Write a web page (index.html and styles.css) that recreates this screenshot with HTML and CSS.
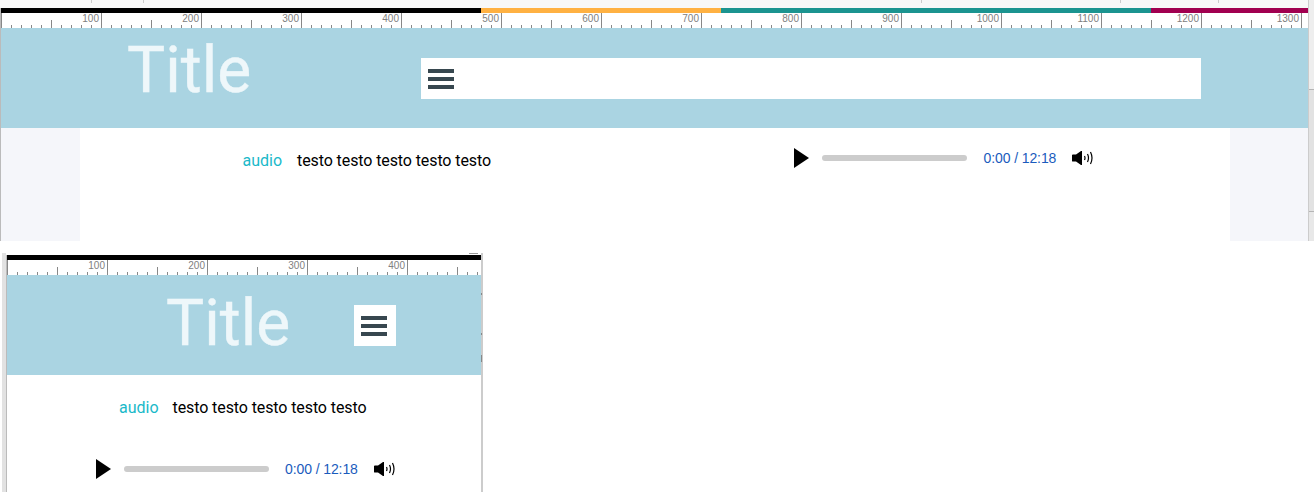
FILE: index.html
```html
<!DOCTYPE html>
<html lang="it">
<head>
    <meta charset="UTF-8">
    <meta name="viewport" content="width=device-width, initial-scale=1.0">
    <title>Title</title>
    <link rel="stylesheet" href="styles.css">
</head>
<body>

    <!-- Vista larga -->
    <div class="screen-wide">
        <div class="column-wide">
            <div class="top-strip">
                <span class="strip-tick tick-a"></span>
                <span class="strip-tick tick-b"></span>
                <span class="strip-tick tick-c"></span>
                <span class="strip-tick tick-d"></span>
                <span class="strip-tick tick-e"></span>
            </div>
            <div class="frame frame-wide">
                <div class="breakpoints">
                    <div class="bp bp-black"></div>
                    <div class="bp bp-orange"></div>
                    <div class="bp bp-teal"></div>
                    <div class="bp bp-crimson"></div>
                </div>
                <div class="ruler">
                    <span>100</span><span>200</span><span>300</span><span>400</span><span>500</span><span>600</span><span>700</span><span>800</span><span>900</span><span>1000</span><span>1100</span><span>1200</span><span>1300</span>
                </div>
                <header class="header">
                    <h1 class="title">Title</h1>
                    <nav class="nav">
                        <div class="burger"><i></i><i></i><i></i></div>
                    </nav>
                </header>
                <div class="page">
                    <main class="content">
                        <div class="track">
                            <span class="track-label">audio</span>
                            <span class="track-text">testo testo testo testo testo</span>
                        </div>
                        <div class="player">
                            <svg class="play" width="15" height="20" viewBox="0 0 15 20"><path d="M0 0L15 10L0 20Z"/></svg>
                            <div class="progress"></div>
                            <span class="time">0:00 / 12:18</span>
                            <svg class="volume" width="21" height="14" viewBox="0 0 21 14"><path d="M0 4Q0 3.500 1 3.500H4L9 0H10V14H9L4 10.500H1Q0 10.500 0 10Z"/><path class="wave" d="M12.500 5Q13.500 7 12.500 9M15.500 3Q17.500 7 15.500 11M18.500 1Q21.500 7 18.500 13"/></svg>
                        </div>
                    </main>
                </div>
            </div>
        </div>
        <div class="rail">
            <div class="rail-part rail-top"></div>
            <div class="rail-part rail-mid"></div>
            <div class="rail-part rail-end"></div>
        </div>
    </div>

    <!-- Vista stretta -->
    <div class="screen-narrow">
        <div class="column-narrow">
            <div class="frame frame-narrow">
                <div class="breakpoints">
                    <div class="bp bp-black"></div>
                </div>
                <div class="ruler">
                    <span>100</span><span>200</span><span>300</span><span>400</span>
                </div>
                <header class="header">
                    <h1 class="title">Title</h1>
                    <nav class="nav">
                        <div class="burger"><i></i><i></i><i></i></div>
                    </nav>
                </header>
                <main class="content">
                    <div class="track">
                        <span class="track-label">audio</span>
                        <span class="track-text">testo testo testo testo testo</span>
                    </div>
                    <div class="player">
                        <svg class="play" width="15" height="20" viewBox="0 0 15 20"><path d="M0 0L15 10L0 20Z"/></svg>
                        <div class="progress"></div>
                        <span class="time">0:00 / 12:18</span>
                        <svg class="volume" width="21" height="14" viewBox="0 0 21 14"><path d="M0 4Q0 3.500 1 3.500H4L9 0H10V14H9L4 10.500H1Q0 10.500 0 10Z"/><path class="wave" d="M12.500 5Q13.500 7 12.500 9M15.500 3Q17.500 7 15.500 11M18.500 1Q21.500 7 18.500 13"/></svg>
                    </div>
                </main>
            </div>
        </div>
        <div class="edge-right"></div>
    </div>

</body>
</html>
```

FILE: styles.css
```css
* {
    margin: 0;
    padding: 0;
    box-sizing: border-box;
}

html, body {
    height: 492px;
    overflow: hidden;
}

body {
    font-family: 'Roboto', sans-serif;
    background-color: #fff;
    width: 1314px;
}

.screen-wide {
    display: flex;
    height: 241px;
}

.column-wide {
    width: 1308px;
}

.rail {
    display: flex;
    flex-direction: column;
    width: 6px;
    border-left: 1px solid #ccc;
}

.rail-part {
    border-bottom: 1px solid #b5b5b5;
}

.rail-top { height: 90px; background-color: #eee; }
.rail-mid { height: 122px; background-color: #e2e2e2; }
.rail-end { flex: 1; background-color: #e8e8e8; border-bottom: 0; }

.top-strip {
    display: flex;
    height: 8px;
    background-color: #f8f8f8;
}

.strip-tick {
    width: 1px;
    height: 3px;
    background-color: #ccc;
}

.tick-a { margin-left: 91px; }
.tick-b { margin-left: 51px; }
.tick-c { margin-left: 777px; }
.tick-d { margin-left: 198px; }
.tick-e { margin-left: 97px; }

.frame-wide {
    height: 233px;
    border-left: 1px solid #bbb;
}

.screen-narrow {
    display: flex;
    height: 239px;
    margin-top: 12px;
    margin-left: 2px;
}

.column-narrow {
    width: 479px;
    padding-top: 2px;
    border-left: 4px solid #e2e2e2;
    background-image: linear-gradient(#999, #999);
    background-size: 9px 1px;
    background-position: right 3px top;
    background-repeat: no-repeat;
}

.frame-narrow {
    height: 237px;
    border-left: 1px solid #bbb;
}

.edge-right {
    width: 2px;
    background-color: #ccc;
    background-image:
        linear-gradient(#888, #888),
        linear-gradient(#888, #888),
        linear-gradient(#888, #888);
    background-size: 1px 2px, 1px 2px, 1px 7px;
    background-position: 0 40px, 0 80px, 0 102px;
    background-repeat: no-repeat;
}

.breakpoints {
    display: flex;
    height: 5px;
}

.bp-black { width: 480px; background-color: #000; }
.bp-orange { width: 240px; background-color: #ffb142; }
.bp-teal { width: 430px; background-color: #1b9490; }
.bp-crimson { width: 157px; background-color: #a10050; }

.frame-narrow .bp-black {
    width: 100%;
}

.ruler {
    display: flex;
    height: 15px;
    overflow: hidden;
    padding-left: 1px;
    background-image:
        linear-gradient(to right, #888 1px, transparent 1px),
        linear-gradient(to right, #888 1px, transparent 1px),
        linear-gradient(to right, #888 1px, transparent 1px);
    background-size: 100px 100%, 50px 8px, 10px 3px;
    background-position: 0 0, 0 bottom, 0 bottom;
    background-repeat: repeat-x;
    background-color: #fff;
}

.ruler span {
    flex: 0 0 100px;
    padding-right: 3px;
    text-align: right;
    font-family: 'Liberation Sans', sans-serif;
    font-size: 10px;
    line-height: 11px;
    color: #808080;
}

.header {
    display: flex;
    height: 100px;
    padding-top: 30px;
    background-color: #aad4e2;
}

.title {
    margin-top: -30px;
    font-size: 64px;
    line-height: 86px;
    font-weight: 400;
    color: #eef7fa;
    -webkit-text-stroke: 0.4px #eef7fa;
}

.frame-wide .title {
    flex: 0 0 420px;
    padding-left: 126px;
}

.frame-narrow .title {
    flex: 0 0 347px;
    margin-top: -24px;
    padding-left: 159px;
}

.nav {
    height: 41px;
    background-color: #fff;
    padding: 11px 7px;
}

.frame-wide .nav {
    width: 780px;
}

.frame-narrow .nav {
    width: 42px;
}

.burger {
    display: flex;
    flex-direction: column;
    gap: 4px;
    width: 26px;
}

.burger i {
    display: block;
    height: 4px;
    background-color: #37474f;
}

.page {
    display: flex;
    justify-content: center;
    height: 113px;
    background-color: #f5f6fa;
}

.frame-wide .content {
    display: flex;
    width: 1150px;
    background-color: #fff;
    padding: 20px 0 0 163px;
}

.frame-narrow .content {
    display: flex;
    flex-direction: column;
    padding: 21px 0 0 89px;
}

.track {
    display: flex;
    gap: 15px;
    font-size: 16px;
    line-height: 24px;
}

.frame-wide .track {
    width: 551px;
    padding-top: 1px;
}

.frame-narrow .track {
    margin-left: 23px;
    gap: 14px;
}

.track-label {
    color: #1ab9c9;
}

.track-text {
    color: #000;
    letter-spacing: -0.1px;
}

.player {
    display: flex;
    align-items: center;
    height: 20px;
}

.frame-narrow .player {
    margin-top: 39px;
}

.progress {
    width: 145px;
    height: 6px;
    margin: 0 17px 0 13px;
    border-radius: 3px;
    background-color: #ccc;
}

.frame-narrow .progress {
    margin-right: 16px;
}

.time {
    font-family: 'Liberation Sans', sans-serif;
    font-size: 14px;
    letter-spacing: -0.1px;
    color: #1a5bbd;
}

.volume {
    margin-left: 16px;
}

.wave {
    fill: none;
    stroke: #000;
    stroke-width: 1.2;
}
```
